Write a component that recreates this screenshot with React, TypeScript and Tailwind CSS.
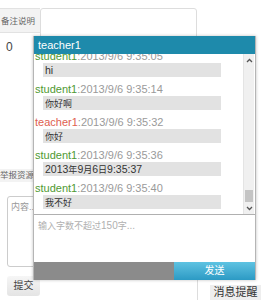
import React from 'react';

type Msg = { name: string; time: string; text: string; teacher?: boolean };

const messages: Msg[] = [
  { name: 'student1', time: '2013/9/6 9:35:05', text: 'hi' },
  { name: 'student1', time: '2013/9/6 9:35:14', text: '你好啊' },
  { name: 'teacher1', time: '2013/9/6 9:35:32', text: '你好', teacher: true },
  { name: 'student1', time: '2013/9/6 9:35:36', text: '2013年9月6日9:35:37' },
  { name: 'student1', time: '2013/9/6 9:35:40', text: '我不好' },
];

const font = { fontFamily: '"Liberation Sans", "Noto Sans CJK SC", sans-serif' };

// the CJK glyphs in the shot are narrow, so set them a bit smaller than the latin
const splitCjk = (s: string) =>
  s.split(/([\u4e00-\u9fff]+)/).map((p, i) =>
    /[\u4e00-\u9fff]/.test(p) ? (
      <span key={i} className="text-[9px]">{p}</span>
    ) : (
      <React.Fragment key={i}>{p}</React.Fragment>
    )
  );

const App: React.FC = () => {
  return (
    <div className="relative w-[261px] h-[300px] overflow-hidden bg-white text-[#555]" style={font}>
      {/* page behind the popup */}
      <div className="flex pt-[8px]">
        <div className="w-[40px] h-[25px] overflow-hidden whitespace-nowrap bg-[#f3f3f3] border-y border-[#e2e2e2] text-[8.5px] leading-[24px] text-[#666] pl-[1px]">备注说明</div>
        <div className="w-[157px] h-[40px] border border-[#ddd] rounded-[3px]"></div>
      </div>
      <div className="absolute left-[6px] top-[38px] text-[12px] text-[#444]">0</div>

      <div className="absolute left-0 top-[169px] w-[40px] h-[13px] overflow-hidden whitespace-nowrap bg-[#f3f3f3] text-[8.5px] leading-[13px] text-[#666]">举报资源</div>
      <div className="absolute left-[7px] top-[196px] w-[60px] h-[71px] border border-[#ccc] rounded-[3px] pl-[3px] pt-[4px] text-[9px] text-[#999] whitespace-nowrap">内容...</div>
      <div className="absolute left-[7px] top-[276px] w-[33px] h-[20px] bg-gradient-to-b from-[#f6f6f6] to-[#e4e4e4] rounded-[3px] text-[10px] leading-[20px] text-center text-[#444]">提交</div>
      <div className="absolute left-[197px] top-[280px] w-px h-[20px] bg-[#ddd]"></div>
      <div className="absolute left-[210px] top-[285px] w-[51px] h-[15px] bg-[#eeeeee] text-[11px] leading-[15px] text-center text-[#333] whitespace-nowrap">消息提醒</div>

      {/* chat popup */}
      <div className="absolute left-[33px] top-[36px] w-[223px] h-[244px] flex flex-col bg-white border-x border-[#b5b5b5] shadow-[0_0_3px_rgba(0,0,0,0.25)]">
        <div className="h-[18px] bg-[#1e8aab] text-white text-[11px] leading-[18px] pl-[4px]">teacher1</div>
        <div className="h-[161px] flex border-b border-[#b0b0b0]">
          <div className="flex-1 overflow-hidden">
            <div className="-mt-[5px]">
              {messages.map((m, i) => (
                <div key={i} className="mb-[5px]">
                  <div className="h-[14px] text-[11px] leading-[14px] pl-[1px] whitespace-nowrap">
                    <span className={m.teacher ? 'text-[#e0604f]' : 'text-[#4f9a32]'}>{m.name}</span>
                    <span className="text-[#9a9a9a]">:{m.time}</span>
                  </div>
                  <div className="ml-[9px] w-[178px] h-[14px] bg-[#e2e2e2] text-[10.5px] leading-[14px] pl-[2px] text-[#333] whitespace-nowrap">{splitCjk(m.text)}</div>
                </div>
              ))}
            </div>
          </div>
          <div className="w-[11px] mr-[1px] flex flex-col bg-[#f0f0f0] border-l border-[#e4e4e4]">
            <div className="h-[12px] flex items-center justify-center">
              <svg width="7" height="5" viewBox="0 0 7 5"><path d="M1 4 L3.5 1.5 L6 4" stroke="#555" strokeWidth="1.3" fill="none" /></svg>
            </div>
            <div className="flex-1"></div>
            <div className="h-[12px] mx-[1px] bg-[#c4c4c4]"></div>
            <div className="h-[12px] flex items-center justify-center">
              <svg width="7" height="5" viewBox="0 0 7 5"><path d="M1 1 L3.5 3.5 L6 1" stroke="#555" strokeWidth="1.3" fill="none" /></svg>
            </div>
          </div>
        </div>
        <div className="flex-1 pl-[4px] pt-[3px] text-[10px] text-[#b0b0b0] whitespace-nowrap">{splitCjk('输入字数不超过150字...')}</div>
        <div className="h-[18px] flex">
          <div className="w-[140px] bg-[#8b8b8b]"></div>
          <div className="flex-1 bg-gradient-to-b from-[#5ec3e2] to-[#2b9ac4] text-white text-[10px] leading-[18px] text-center">发送</div>
        </div>
      </div>
    </div>
  );
};

export default App;
